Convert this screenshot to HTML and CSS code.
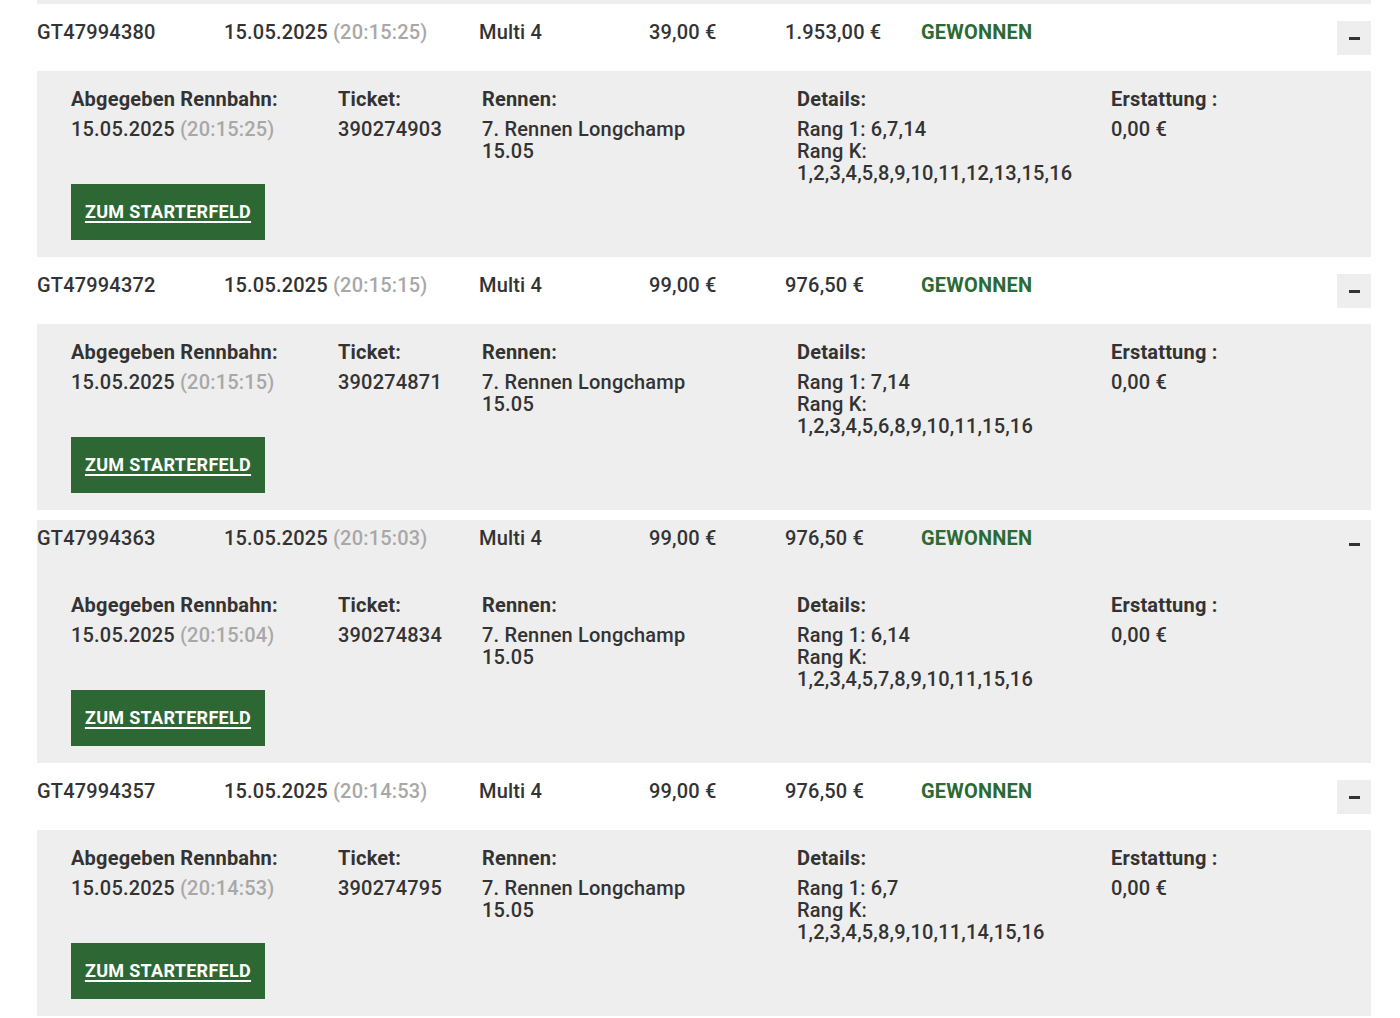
FILE: index.html
```html
<!DOCTYPE html>
<html lang="de">
<head>
<meta charset="utf-8">
<title>Wetten</title>
<link rel="stylesheet" href="styles.css">
</head>
<body>
<div class="list">
  <div class="prev-tail"></div>

  <div class="bet">
    <div class="bet-head">
      <span class="id">GT47994380</span>
      <span>15.05.2025 <span class="time">(20:15:25)</span></span>
      <span>Multi 4</span>
      <span>39,00 €</span>
      <span>1.953,00 €</span>
      <span class="status">GEWONNEN</span>
      <span class="spacer"></span>
      <button class="toggle" aria-label="Schließen"><span class="minus"></span></button>
    </div>
    <div class="bet-detail">
      <div class="detail-grid">
        <div class="col"><div class="label">Abgegeben Rennbahn:</div><div class="value">15.05.2025 <span class="time">(20:15:25)</span></div></div>
        <div class="col"><div class="label">Ticket:</div><div class="value">390274903</div></div>
        <div class="col"><div class="label">Rennen:</div><div class="value">7. Rennen Longchamp<br>15.05</div></div>
        <div class="col"><div class="label">Details:</div><div class="value">Rang 1: 6,7,14<br>Rang K:<br>1,2,3,4,5,8,9,10,11,12,13,15,16</div></div>
        <div class="col"><div class="label">Erstattung :</div><div class="value">0,00 €</div></div>
      </div>
      <a class="btn" href="#">ZUM STARTERFELD</a>
    </div>
  </div>

  <div class="bet">
    <div class="bet-head">
      <span class="id">GT47994372</span>
      <span>15.05.2025 <span class="time">(20:15:15)</span></span>
      <span>Multi 4</span>
      <span>99,00 €</span>
      <span>976,50 €</span>
      <span class="status">GEWONNEN</span>
      <span class="spacer"></span>
      <button class="toggle" aria-label="Schließen"><span class="minus"></span></button>
    </div>
    <div class="bet-detail">
      <div class="detail-grid">
        <div class="col"><div class="label">Abgegeben Rennbahn:</div><div class="value">15.05.2025 <span class="time">(20:15:15)</span></div></div>
        <div class="col"><div class="label">Ticket:</div><div class="value">390274871</div></div>
        <div class="col"><div class="label">Rennen:</div><div class="value">7. Rennen Longchamp<br>15.05</div></div>
        <div class="col"><div class="label">Details:</div><div class="value">Rang 1: 7,14<br>Rang K:<br>1,2,3,4,5,6,8,9,10,11,15,16</div></div>
        <div class="col"><div class="label">Erstattung :</div><div class="value">0,00 €</div></div>
      </div>
      <a class="btn" href="#">ZUM STARTERFELD</a>
    </div>
  </div>

  <div class="bet hover">
    <div class="bet-head">
      <span class="id">GT47994363</span>
      <span>15.05.2025 <span class="time">(20:15:03)</span></span>
      <span>Multi 4</span>
      <span>99,00 €</span>
      <span>976,50 €</span>
      <span class="status">GEWONNEN</span>
      <span class="spacer"></span>
      <button class="toggle" aria-label="Schließen"><span class="minus"></span></button>
    </div>
    <div class="bet-detail">
      <div class="detail-grid">
        <div class="col"><div class="label">Abgegeben Rennbahn:</div><div class="value">15.05.2025 <span class="time">(20:15:04)</span></div></div>
        <div class="col"><div class="label">Ticket:</div><div class="value">390274834</div></div>
        <div class="col"><div class="label">Rennen:</div><div class="value">7. Rennen Longchamp<br>15.05</div></div>
        <div class="col"><div class="label">Details:</div><div class="value">Rang 1: 6,14<br>Rang K:<br>1,2,3,4,5,7,8,9,10,11,15,16</div></div>
        <div class="col"><div class="label">Erstattung :</div><div class="value">0,00 €</div></div>
      </div>
      <a class="btn" href="#">ZUM STARTERFELD</a>
    </div>
  </div>

  <div class="bet">
    <div class="bet-head">
      <span class="id">GT47994357</span>
      <span>15.05.2025 <span class="time">(20:14:53)</span></span>
      <span>Multi 4</span>
      <span>99,00 €</span>
      <span>976,50 €</span>
      <span class="status">GEWONNEN</span>
      <span class="spacer"></span>
      <button class="toggle" aria-label="Schließen"><span class="minus"></span></button>
    </div>
    <div class="bet-detail">
      <div class="detail-grid">
        <div class="col"><div class="label">Abgegeben Rennbahn:</div><div class="value">15.05.2025 <span class="time">(20:14:53)</span></div></div>
        <div class="col"><div class="label">Ticket:</div><div class="value">390274795</div></div>
        <div class="col"><div class="label">Rennen:</div><div class="value">7. Rennen Longchamp<br>15.05</div></div>
        <div class="col"><div class="label">Details:</div><div class="value">Rang 1: 6,7<br>Rang K:<br>1,2,3,4,5,8,9,10,11,14,15,16</div></div>
        <div class="col"><div class="label">Erstattung :</div><div class="value">0,00 €</div></div>
      </div>
      <a class="btn" href="#">ZUM STARTERFELD</a>
    </div>
  </div>
</div>
</body>
</html>
```

FILE: styles.css
```css
html, body {
  margin: 0;
  padding: 0;
  background: #ffffff;
}
body {
  font-family: Roboto, "Liberation Sans", Arial, sans-serif;
  font-size: 20px;
  line-height: 22px;
  letter-spacing: 0.18px;
  color: #333333;
  font-weight: 500;
}
.list {
  width: 1334px;
  margin-left: 37px;
}
.prev-tail {
  height: 4px;
  background: #eeeeee;
}
.bet {
  margin-top: 10px;
}
.bet-head {
  display: grid;
  grid-template-columns: 187px 255px 170px 136px 136px auto 1fr 34px;
  align-items: start;
  height: 57px;
  box-sizing: border-box;
  padding-top: 7px;
}
.bet.hover .bet-head {
  background: #eeeeee;
}
.time {
  color: #a8a8a8;
}
.status {
  color: #2d6a33;
  font-weight: 700;
}
.toggle {
  width: 34px;
  height: 34px;
  border: 0;
  padding: 0;
  margin: 0;
  background: #eeeeee;
  display: flex;
  align-items: center;
  justify-content: center;
  cursor: pointer;
}
.minus {
  display: block;
  width: 11px;
  height: 3px;
  background: #333333;
}
.bet-detail {
  background: #eeeeee;
  height: 186px;
  box-sizing: border-box;
  padding: 17px 34px 0;
}
.detail-grid {
  display: grid;
  grid-template-columns: 267px 144px 315px 314px 1fr;
}
.label {
  font-weight: 700;
  margin-bottom: 8px;
}
.btn {
  display: flex;
  align-items: center;
  justify-content: center;
  width: 194px;
  height: 56px;
  box-sizing: border-box;
  background: #2d6733;
  color: #ffffff;
  font-weight: 700;
  font-size: 18px;
  letter-spacing: 0.3px;
  text-decoration: underline;
  text-underline-offset: 3px;
  text-decoration-thickness: 2px;
}
```
